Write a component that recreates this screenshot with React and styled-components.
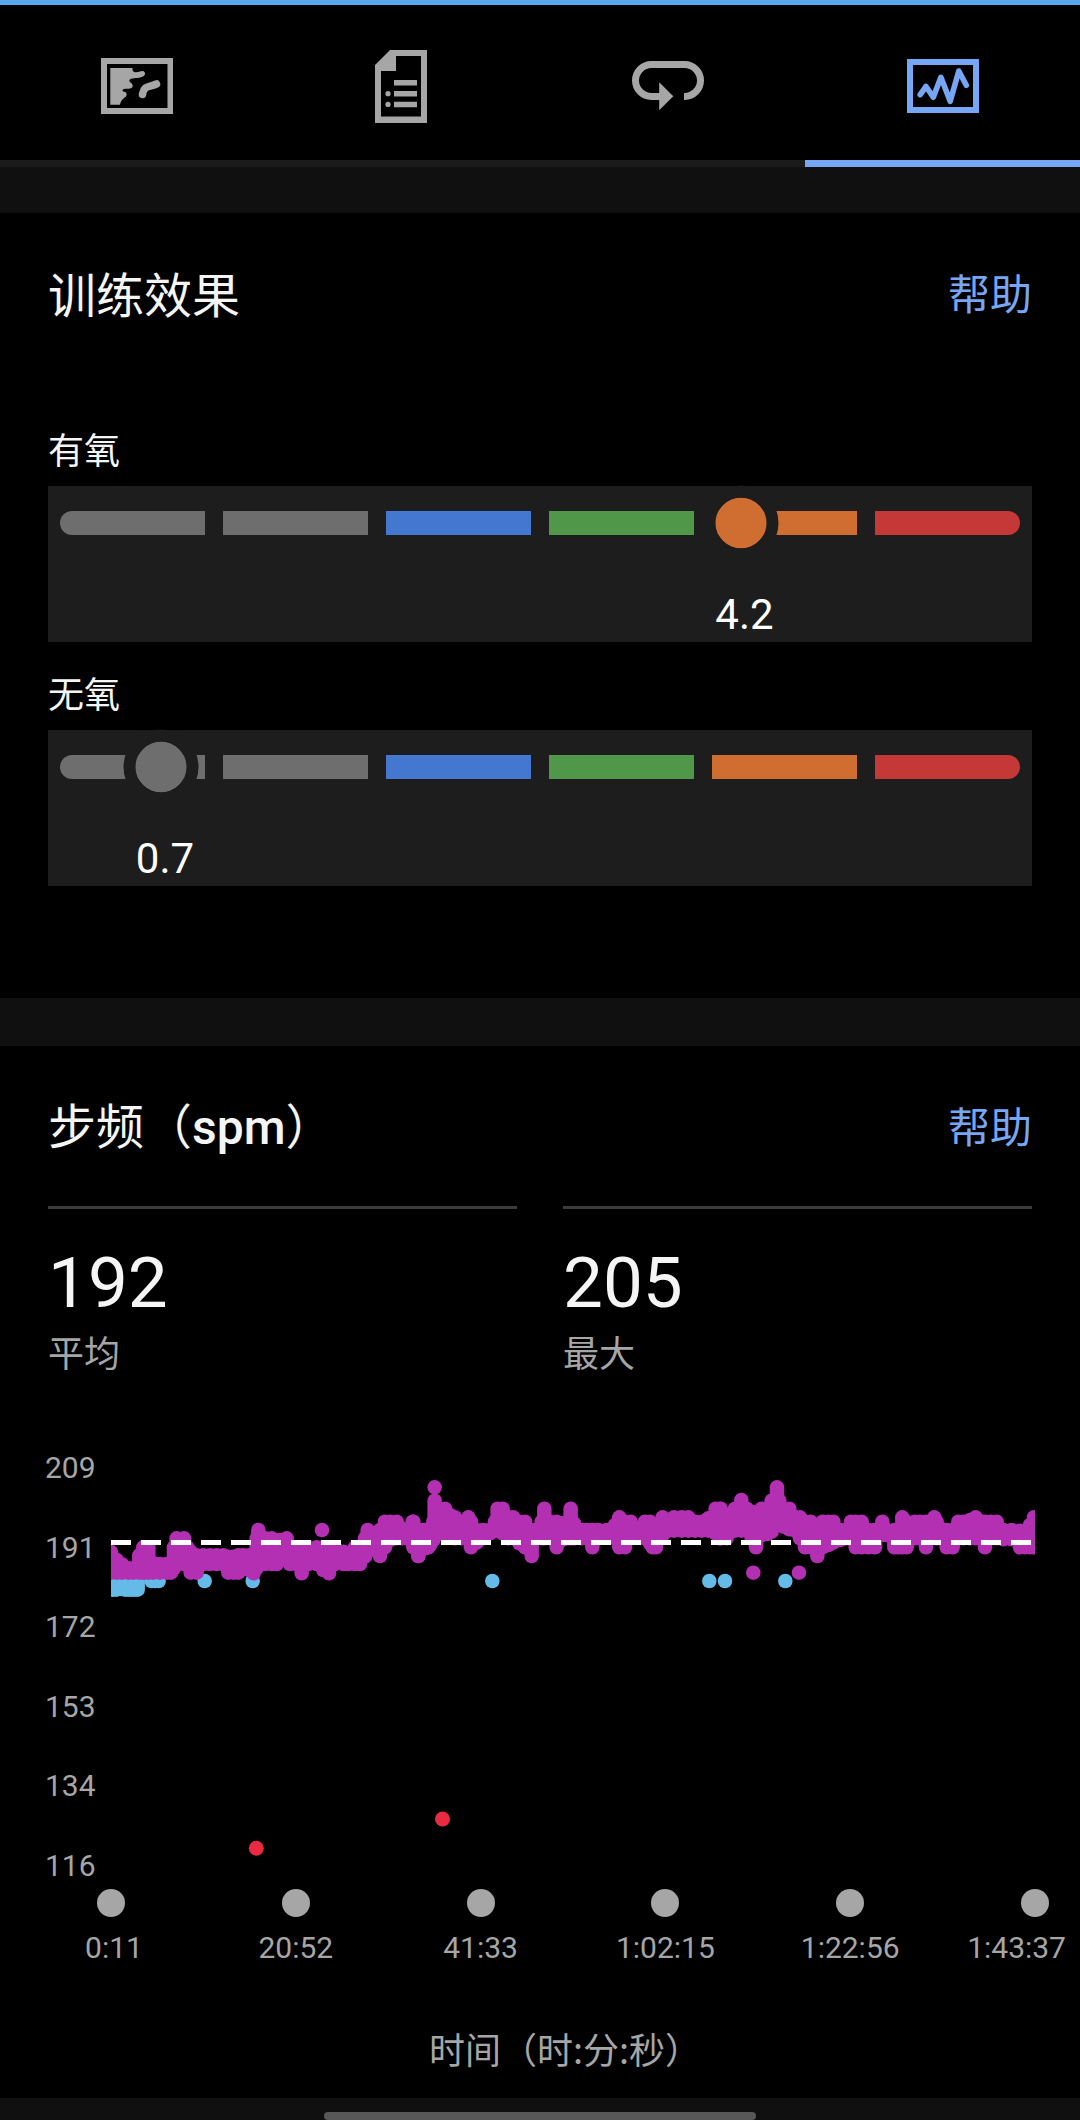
import React from "react";
import styled, { createGlobalStyle, ThemeProvider } from "styled-components";

const theme = {
    colors: {
        black: "#000000",
        band: "#101010",
        track: "#1b1b1b",
        panel: "#1d1d1d",
        white: "#f5f5f5",
        muted: "#a6a6a6",
        primary: "#76a6f4",
        rule: "#3c3c3c",
        purple: "#b430b3",
        sky: "#65bbe7",
        red: "#ea2a40",
    },
    fonts: {
        text: `Roboto, "Noto Sans CJK SC", sans-serif`,
        cjk: `"Noto Sans CJK SC", Roboto, sans-serif`,
    },
};

const GlobalStyle = createGlobalStyle`
    * {
        box-sizing: border-box;
    }

    body {
        margin: 0;
        background: #000;
    }
`

const Screen = styled.main`
    width: 1080px;
    height: 2120px;
    display: flex;
    flex-direction: column;
    overflow: hidden;
    background: ${props => props.theme.colors.black};
    color: ${props => props.theme.colors.white};
    font-family: ${props => props.theme.fonts.text};
`

const StatusStrip = styled.div`
    height: 5px;
    flex-shrink: 0;
    background: #58a6ee;
`

const Tabs = styled.nav`
    display: grid;
    grid-template-columns: 273px 256px 276px 275px;
    height: 162px;
    flex-shrink: 0;
`

const Tab = styled.button`
    display: flex;
    justify-content: center;
    align-items: center;
    padding: 7px 0 0;
    border: none;
    border-bottom: 7px solid ${props => props.$active ? props.theme.colors.primary : props.theme.colors.track};
    background: transparent;
    color: ${props => props.$active ? props.theme.colors.primary : props.theme.colors.muted};

    svg {
        display: block;
    }
`

const Band = styled.div`
    height: ${props => props.$height}px;
    flex-shrink: 0;
    background: ${props => props.theme.colors.band};
`

const Section = styled.section`
    height: ${props => props.$height}px;
    flex-shrink: 0;
    padding: 51px 48px 0;
`

const SectionHeader = styled.header`
    display: flex;
    justify-content: space-between;
    align-items: center;
    height: 60px;
    margin-bottom: ${props => props.$gap}px;
`

const Title = styled.h2`
    margin: 0 0 4px;
    font-family: ${props => props.theme.fonts.cjk};
    font-size: 48px;
    font-weight: 400;
    line-height: 60px;

    span {
        font-family: Roboto, sans-serif;
        font-weight: 500;
    }
`

const HelpLink = styled.a`
    margin-top: 4px;
    font-size: 42px;
    line-height: 60px;
    color: ${props => props.theme.colors.primary};
`

const EffectList = styled.div`
    display: flex;
    flex-direction: column;
    gap: 27px;
`

const EffectLabel = styled.div`
    height: 50px;
    margin-bottom: 11px;
    font-size: 36px;
    line-height: 54px;
`

const EffectPanel = styled.div`
    position: relative;
    height: 156px;
    padding: 25px 12px 0;
    background: ${props => props.theme.colors.panel};
`

const Scale = styled.div`
    display: grid;
    grid-template-columns: repeat(6, 145px);
    gap: 18px;
`

const ScaleStep = styled.div`
    height: 24px;
    background: ${props => props.$color};

    &:first-child {
        border-radius: 12px 0 0 12px;
    }

    &:last-child {
        border-radius: 0 12px 12px 0;
    }
`

const Knob = styled.div`
    position: absolute;
    top: 37px;
    width: 75px;
    height: 75px;
    border: 12px solid ${props => props.theme.colors.panel};
    border-radius: 50%;
    background: ${props => props.$color};
    background-clip: padding-box;
    transform: translate(-50%, -50%);
`

const KnobValue = styled.div`
    position: absolute;
    top: 104px;
    font-size: 42px;
    line-height: 50px;
    color: #ffffff;
    transform: translateX(-50%);
`

const Stats = styled.div`
    display: grid;
    grid-template-columns: 1fr 1fr;
    gap: 46px;
`

const Stat = styled.div`
    height: 244px;
    padding-top: 32px;
    border-top: 3px solid ${props => props.theme.colors.rule};
`

const StatNumber = styled.div`
    font-size: 71px;
    line-height: 84px;
`

const StatLabel = styled.div`
    margin-top: 4px;
    font-size: 36px;
    line-height: 52px;
    color: ${props => props.theme.colors.muted};
`

const Chart = styled.div`
    display: flex;
    justify-content: space-between;
    height: 434px;
    margin: 0 -3px;
`

const YAxis = styled.div`
    display: flex;
    flex-direction: column;
    justify-content: space-between;
    font-size: 30px;
    line-height: 36px;
    color: ${props => props.theme.colors.muted};
`

const Plot = styled.svg`
    display: block;
    width: 924px;
    height: 434px;
`

const XAxis = styled.div`
    display: flex;
    justify-content: space-between;
    margin: 5px -17px 0 49px;
`

const XTick = styled.div`
    display: flex;
    flex-direction: column;
    align-items: center;
    width: 28px;
    font-size: 30px;
    line-height: 36px;
    white-space: nowrap;
    color: ${props => props.theme.colors.muted};

    &::before {
        content: '';
        width: 28px;
        height: 28px;
        margin-bottom: 13px;
        border-radius: 50%;
        background: ${props => props.theme.colors.muted};
    }

    &:first-child span {
        margin-right: -6px;
    }

    &:last-child {
        align-items: flex-end;

        span {
            margin-right: -17px;
        }
    }
`

const AxisCaption = styled.div`
    margin: 56px 0 0 381px;
    font-family: ${props => props.theme.fonts.cjk};
    font-size: 36px;
    line-height: 52px;
    color: ${props => props.theme.colors.muted};
`

const Footer = styled.footer`
    display: flex;
    justify-content: center;
    align-items: flex-end;
    height: 22px;
    flex-shrink: 0;
    background: ${props => props.theme.colors.band};
`

const HomeBar = styled.div`
    width: 432px;
    height: 8px;
    border-radius: 4px;
    background: #585858;
`

const MapIcon = () => (
    <svg width="72" height="56" viewBox="0 0 72 56" fill="currentColor">
        <path d="M0 0H72V56H0ZM6 6V50H66.500V6Z" fillRule="evenodd" />
        <path d="M9.300 10H31.500Q31 14.500 35 14.300C39 14 40 12.500 42 13C45 14 44.500 17.500 42 18.500C38 20.500 35 19.500 30 20.800C28 21.500 28 23 29 24C31 25.500 32.300 27 31.500 29C30 31.500 26 30.500 23 31C21 31.500 21 33.500 23 33.800C25.500 34 26.500 36.500 25 38.500C22.500 40.500 20 42 19 46.700H9.300Z" />
        <path d="M55.500 26C50 28.500 47 28 44.500 30C42 32 42 34 41.500 36.500" fill="none" stroke="currentColor" strokeWidth="7.500" strokeLinecap="round" strokeLinejoin="round" />
    </svg>
);

const DocIcon = () => (
    <svg width="52" height="73" viewBox="0 0 52 73" fill="currentColor">
        <path d="M15 0H52V73H0V15ZM21 6V21H6V66.500H46V6Z" fillRule="evenodd" />
        <path d="M19 30H42V35.500H19ZM19 41H42V46.500H19ZM19 51.700H42V57.200H19Z" />
        <circle cx="13" cy="43.700" r="2.600" />
        <circle cx="13" cy="54.400" r="2.600" />
    </svg>
);

const LapIcon = () => (
    <svg width="74" height="50" viewBox="-2 0 74 50" fill="currentColor">
        <path d="M52 35.500H52.500A16 16 0 0 0 52.500 3.500H19.500A16 16 0 0 0 19.500 35.500H29" fill="none" stroke="currentColor" strokeWidth="7" />
        <path d="M27.200 21.300L41.300 35.300L27.200 49.300Z" />
    </svg>
);

const GraphIcon = () => (
    <svg width="72" height="54" viewBox="0 0 72 54" fill="none" stroke="currentColor">
        <rect x="3" y="3" width="66" height="48" strokeWidth="6" />
        <path d="M13.200 35.600L19 27.500L26.300 38.300L33.900 18.300L43.200 42.300L51.800 12L59.300 26.300" strokeWidth="5.600" strokeLinecap="round" strokeLinejoin="round" />
    </svg>
);

const GREY = "#6e6e6e";
const steps = [GREY, GREY, "#4477cf", "#50974a", "#d06d30", "#c43838"];

const effects = [
    { label: "有氧", score: 4.2 },
    { label: "无氧", score: 0.7 },
];

const yLabels = [209, 191, 172, 153, 134, 116];
const xLabels = ["0:11", "20:52", "41:33", "1:02:15", "1:22:56", "1:43:37"];

// cadence spread per moment: [time, highest, lowest], in thirds of a pixel
const cadence = [
    {
        start: -33,
        points: [
            [33, 276, 338], [50, 300, 338], [66, 313, 338], [85, 325, 338], [100, 325, 338], [118, 286, 338],
            [130, 262, 338], [145, 262, 338], [160, 310, 338], [180, 312, 338], [200, 312, 338], [213, 312, 338],
            [222, 262, 325], [230, 235, 312], [252, 235, 312], [262, 262, 312], [272, 275, 338], [290, 286, 338],
            [310, 286, 312], [330, 286, 312], [350, 286, 312], [370, 286, 312], [385, 290, 338], [400, 290, 338],
            [415, 286, 338], [430, 286, 312], [448, 286, 330], [461, 286, 340], [470, 235, 325], [475, 210, 312],
            [495, 235, 312], [515, 235, 312], [530, 240, 312], [545, 240, 290], [560, 235, 290], [570, 262, 312],
            [590, 262, 312], [605, 262, 340], [625, 262, 312], [650, 262, 312], [670, 262, 330], [687, 262, 340],
            [705, 262, 312], [730, 275, 312], [745, 290, 312], [765, 262, 312], [780, 262, 312], [795, 235, 290],
            [803, 210, 270], [820, 230, 270], [840, 210, 288], [855, 185, 262], [870, 185, 240], [890, 185, 235],
            [905, 205, 235], [920, 210, 225], [938, 185, 235], [955, 210, 288], [970, 210, 262], [985, 210, 262],
            [666, 210, 210],
        ],
    },
    {
        start: 867,
        points: [
            [20, 210, 235], [40, 185, 262], [55, 210, 288], [75, 210, 265], [90, 210, 255], [100, 185, 240],
            [109, 165, 225], [104, 122, 225], [104, 82, 82], [118, 150, 220], [135, 146, 220], [150, 165, 220],
            [165, 172, 235], [185, 185, 235], [205, 172, 235], [213, 185, 262], [230, 210, 248], [250, 210, 235],
            [270, 210, 220], [285, 185, 212], [293, 146, 212], [308, 146, 220], [325, 172, 235], [340, 172, 235],
            [358, 185, 250], [375, 185, 262], [395, 210, 288], [410, 210, 235], [425, 185, 235], [433, 146, 235],
            [450, 185, 235], [470, 185, 262], [485, 190, 240], [503, 185, 235], [512, 146, 235], [522, 190, 235],
            [545, 210, 235], [562, 210, 235], [577, 210, 262], [595, 210, 235], [620, 210, 220], [645, 195, 235],
            [658, 172, 262], [675, 185, 262], [692, 185, 235], [715, 205, 220], [735, 185, 235], [750, 185, 250],
            [758, 210, 262], [768, 205, 262], [788, 172, 225], [805, 180, 212], [822, 172, 212], [845, 172, 212],
            [865, 172, 212], [885, 185, 212], [905, 185, 212], [925, 175, 212], [947, 146, 220], [962, 146, 235],
            [980, 170, 235],
        ],
    },
    {
        start: 1827,
        points: [
            [0, 146, 235], [20, 165, 212], [45, 146, 212], [64, 120, 212], [80, 146, 212], [95, 155, 235],
            [108, 162, 262], [125, 146, 225], [142, 146, 222], [155, 122, 215], [171, 82, 180], [178, 122, 180],
            [190, 146, 200], [208, 146, 208], [225, 172, 212], [240, 172, 235], [255, 185, 262], [272, 185, 262],
            [292, 195, 288], [308, 185, 262], [325, 185, 255], [340, 185, 248], [360, 210, 240], [378, 210, 235],
            [393, 185, 235], [407, 185, 262], [425, 185, 262], [445, 210, 262], [465, 210, 262], [487, 185, 225],
            [500, 210, 225], [523, 210, 262], [535, 210, 262], [547, 172, 262], [560, 185, 262], [585, 185, 235],
            [600, 185, 235], [618, 185, 262], [643, 172, 230], [650, 185, 235], [665, 208, 235], [680, 210, 262],
            [698, 210, 262], [715, 185, 235], [730, 185, 235], [750, 180, 235], [767, 172, 235], [785, 185, 235],
            [795, 185, 262], [812, 185, 235], [830, 185, 235], [850, 210, 238], [875, 210, 238], [900, 212, 262],
            [915, 212, 262], [930, 195, 262], [942, 172, 262], [100, 338, 338], [237, 338, 338],
        ],
    },
].flatMap(({ start, points }) => points.map(([x, high, low]) => [x + start, high, low]));

const slow = [
    [6, 363, 389], [16, 363, 389], [28, 363, 386], [42, 363, 389], [52, 363, 389], [61, 363, 389],
    [70, 363, 389], [80, 363, 389], [122, 363, 363], [132, 363, 363], [143, 363, 363], [281, 363, 363],
    [425, 363, 363], [1144, 363, 363], [1795, 363, 363], [1842, 363, 363], [2023, 363, 363],
];

const Dots = ({ data, color }) => (
    <g stroke={color} strokeWidth="43.500" strokeLinecap="round">
        {data.map(([x, high, low]) => (
            <path key={`${x}-${high}`} d={`M${x} ${high}V${low + 0.1}`} />
        ))}
    </g>
);

function CadencePlot() {
    const { purple, sky, red } = theme.colors;
    return (
        <Plot viewBox="0 0 924 434">
            <g transform="translate(0 10) scale(0.33333)">
                <Dots data={slow} color={sky} />
                <Dots data={cadence} color={purple} />
            </g>
            <circle cx="145.300" cy="398.300" r="7.500" fill={red} />
            <circle cx="331.500" cy="369" r="7.500" fill={red} />
            <path d="M0 92.500H924" stroke="#ffffff" strokeWidth="5" strokeDasharray="20 10" />
        </Plot>
    );
}

function Effect({ label, score }) {
    const step = Math.floor(score);
    const left = 12 + step * 163 + (score - step) * 145;
    return (
        <div>
            <EffectLabel>{label}</EffectLabel>
            <EffectPanel>
                <Scale>
                    {steps.map((color, i) => <ScaleStep key={i} $color={color} />)}
                </Scale>
                <Knob $color={steps[step]} style={{ left: Math.floor(left) }} />
                <KnobValue style={{ left: left + 3.5 }}>{score}</KnobValue>
            </EffectPanel>
        </div>
    );
}

export default function App() {
    return (
        <ThemeProvider theme={theme}>
            <GlobalStyle />
            <Screen>
                <StatusStrip />
                <Tabs>
                    <Tab><MapIcon /></Tab>
                    <Tab><DocIcon /></Tab>
                    <Tab><LapIcon /></Tab>
                    <Tab $active><GraphIcon /></Tab>
                </Tabs>
                <Band $height={46} />

                <Section $height={785}>
                    <SectionHeader $gap={101}>
                        <Title>训练效果</Title>
                        <HelpLink>帮助</HelpLink>
                    </SectionHeader>
                    <EffectList>
                        {effects.map(effect => <Effect key={effect.label} {...effect} />)}
                    </EffectList>
                </Section>
                <Band $height={48} />

                <Section $height={1052}>
                    <SectionHeader $gap={49}>
                        <Title>步频（<span>spm</span>）</Title>
                        <HelpLink>帮助</HelpLink>
                    </SectionHeader>
                    <Stats>
                        <Stat>
                            <StatNumber>192</StatNumber>
                            <StatLabel>平均</StatLabel>
                        </Stat>
                        <Stat>
                            <StatNumber>205</StatNumber>
                            <StatLabel>最大</StatLabel>
                        </Stat>
                    </Stats>
                    <Chart>
                        <YAxis>
                            {yLabels.map(value => <span key={value}>{value}</span>)}
                        </YAxis>
                        <CadencePlot />
                    </Chart>
                    <XAxis>
                        {xLabels.map(time => <XTick key={time}><span>{time}</span></XTick>)}
                    </XAxis>
                    <AxisCaption>时间（时:分:秒）</AxisCaption>
                </Section>

                <Footer>
                    <HomeBar />
                </Footer>
            </Screen>
        </ThemeProvider>
    );
}
